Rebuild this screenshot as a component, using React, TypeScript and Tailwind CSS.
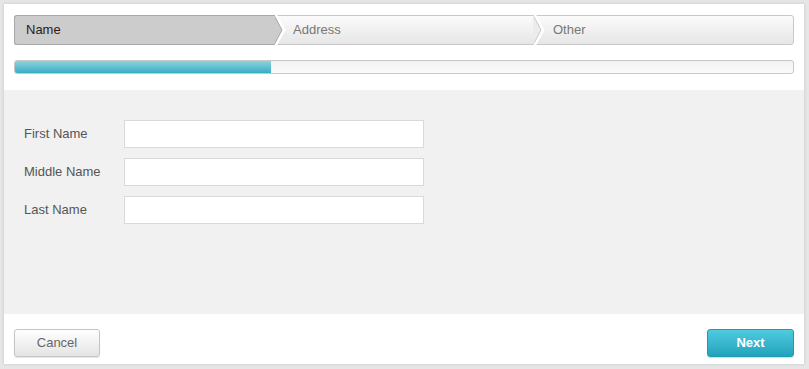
const steps = [
  { label: "Name", width: "w-[262px]", active: true },
  { label: "Address", width: "w-[260px]", active: false },
  { label: "Other", width: "flex-1", active: false },
];

const fields = ["First Name", "Middle Name", "Last Name"];

const Chevron = ({ active }: { active: boolean }) => (
  <svg
    className="absolute top-[-1px] right-[-10px] z-10"
    width="12"
    height="30"
    viewBox="0 0 12 30"
  >
    <polyline points="1,-1 10,15 1,31" fill="none" stroke="#ffffff" strokeWidth="3" />
    <polygon
      points="0,0 8,15 0,30"
      fill={active ? "#cccccc" : "#ececec"}
      stroke={active ? "#a8a8a8" : "#c8c8c8"}
      strokeWidth="1"
    />
    <rect x="0" y="1" width="1" height="28" fill={active ? "#cccccc" : "#ececec"} />
  </svg>
);

export default function App() {
  return (
    <div className="h-[369px] w-[809px] bg-[#e6e6e6] p-[4px] font-['Liberation_Sans',Arial,sans-serif]">
      <div className="flex h-[360px] w-[800px] flex-col bg-white shadow-[0_0_3px_rgba(0,0,0,0.15)]">
        {/* Header */}
        <div className="px-[10px] pt-[11px] pb-[16px]">
          <div className="flex h-[30px] rounded-[3px] border border-[#c8c8c8] bg-gradient-to-b from-[#fbfbfb] to-[#e6e6e6]">
            {steps.map((s, i) => (
              <div
                key={s.label}
                className={`relative flex items-center text-[13px] ${s.width} ${
                  s.active
                    ? "-m-px rounded-l-[3px] border border-r-0 border-[#a8a8a8] bg-[#cccccc] pl-[11px] text-[#2a1a1a]"
                    : "pl-[18px] text-[#777777]"
                }`}
              >
                {s.label}
                {i < steps.length - 1 && <Chevron active={s.active} />}
              </div>
            ))}
          </div>

          <div className="mt-[15px] h-[14px] overflow-hidden rounded-[3px] border border-[#c8c8c8] bg-gradient-to-b from-[#f2f2f2] to-[#fbfbfb]">
            <div className="h-full w-[256px] bg-gradient-to-b from-[#8ad2de] to-[#35adc4]" />
          </div>
        </div>

        {/* Body */}
        <div className="flex h-[224px] flex-col gap-[10px] bg-[#f1f1f1] px-[20px] pt-[30px]">
          {fields.map((f) => (
            <div key={f} className="flex items-center">
              <label className="w-[100px] text-[13px] text-[#555555]">{f}</label>
              <input
                type="text"
                className="h-[28px] w-[300px] border border-[#d9d9d9] bg-white px-2 text-[13px] outline-none"
              />
            </div>
          ))}
        </div>

        {/* Footer */}
        <div className="flex flex-1 items-start justify-between px-[10px] pt-[15px]">
          <button className="h-[28px] w-[86px] rounded-[3px] border border-[#c4c4c4] bg-gradient-to-b from-[#ffffff] to-[#e4e4e4] text-[13px] text-[#666666] shadow-[0_1px_1px_rgba(0,0,0,0.1)]">
            Cancel
          </button>
          <button className="h-[28px] w-[87px] rounded-[3px] border border-[#1b9cb3] bg-gradient-to-b from-[#4fcbe0] to-[#1fa3bb] text-[13px] font-bold text-white shadow-[0_1px_1px_rgba(0,0,0,0.15)]">
            Next
          </button>
        </div>
      </div>
    </div>
  );
}
